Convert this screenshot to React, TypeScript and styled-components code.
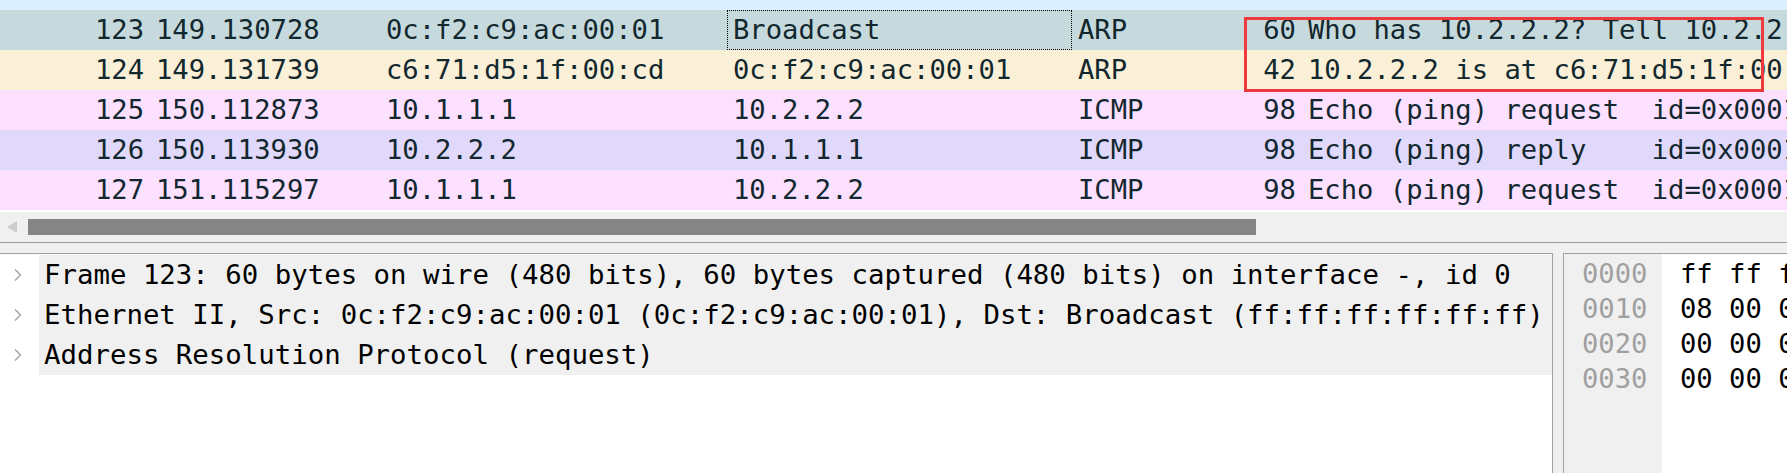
import React from "react";
import styled, { createGlobalStyle } from "styled-components";

const GlobalStyle = createGlobalStyle`
  html, body {
    margin: 0;
    padding: 0;
    background: #ffffff;
  }
  body {
    font-family: "DejaVu Sans Mono", "Liberation Mono", monospace;
  }
`;

const MONO = `"DejaVu Sans Mono", "Liberation Mono", monospace`;

const Window = styled.div`
  width: 1787px;
  height: 473px;
  display: flex;
  flex-direction: column;
  overflow: hidden;
  background: #f0f0f0;
  font-family: ${MONO};
  font-size: 27.2px;
`;

const PacketList = styled.div`
  position: relative;
  display: flex;
  flex-direction: column;
  background: #ffffff;
  padding-bottom: 2px;
  overflow: hidden;
`;

const PartialRow = styled.div`
  height: 10px;
  background: #daeeff;
`;

const Row = styled.div<{ $bg: string }>`
  display: grid;
  grid-template-columns: 150px 230px 347px 345px 118px 112px 1fr;
  height: 40px;
  line-height: 40px;
  background: ${(p) => p.$bg};
  color: #12272e;
`;

const Cell = styled.div<{ $right?: boolean; $focused?: boolean }>`
  padding: 0 6px;
  white-space: pre;
  overflow: hidden;
  text-align: ${(p) => (p.$right ? "right" : "left")};
  outline: ${(p) => (p.$focused ? "1px dotted #000000" : "none")};
  outline-offset: -1px;
`;

const Annotation = styled.div`
  position: absolute;
  left: 1244px;
  top: 17px;
  width: 520px;
  height: 75px;
  box-sizing: border-box;
  border: 3px solid #ec3a3f;
  pointer-events: none;
`;

const HScrollbar = styled.div`
  height: 31px;
  background: #f0f0f0;
  display: flex;
  align-items: flex-start;
  padding-top: 7px;
  box-sizing: border-box;
  border-bottom: 1px solid #9a9a9a;
`;

const ArrowLeft = styled.div`
  width: 28px;
  height: 16px;
  display: flex;
  align-items: center;
  justify-content: flex-start;
  padding-left: 7px;
  box-sizing: border-box;
`;

const Thumb = styled.div`
  width: 1228px;
  height: 16px;
  background: #858585;
`;

const Bottom = styled.div`
  flex: 1;
  display: flex;
  gap: 10px;
  margin-top: 10px;
  min-height: 0;
`;

const DetailPane = styled.div`
  width: 1554px;
  margin-left: -1px;
  flex-shrink: 0;
  border: 1px solid #a0a0a0;
  border-bottom: none;
  background: #ffffff;
  padding-top: 1px;
  box-sizing: border-box;
  display: flex;
  flex-direction: column;
`;

const TreeRow = styled.div`
  display: flex;
  height: 40px;
`;

const Expander = styled.div`
  width: 39px;
  flex-shrink: 0;
  display: flex;
  align-items: center;
  padding-left: 14px;
  box-sizing: border-box;
  background: #ffffff;
`;

const TreeLabel = styled.div`
  flex: 1;
  background: #f0f0f0;
  color: #000000;
  font-size: 27.38px;
  line-height: 40px;
  padding-left: 5px;
  white-space: pre;
  overflow: hidden;
`;

const HexPane = styled.div`
  flex: 1;
  display: flex;
  border: 1px solid #a0a0a0;
  border-right: none;
  border-bottom: none;
  background: #ffffff;
  overflow: hidden;
`;

const OffsetColumn = styled.div`
  width: 98px;
  flex-shrink: 0;
  background: #f0f0f0;
  padding: 2px 0 0 18px;
  box-sizing: border-box;
  color: #a0a0a0;
`;

const BytesColumn = styled.div`
  flex: 1;
  padding: 2px 0 0 18px;
  color: #000000;
  overflow: hidden;
`;

const HexLine = styled.div`
  height: 35px;
  line-height: 35px;
  white-space: pre;
`;

const Chevron = () => (
  <svg width="8" height="14" viewBox="0 0 8 14">
    <polyline
      points="1,1.5 6.5,7 1,12.5"
      fill="none"
      stroke="#a0a0a0"
      strokeWidth="1.3"
    />
  </svg>
);

const LeftTriangle = () => (
  <svg width="10" height="12" viewBox="0 0 10 12">
    <polygon points="0,6 10,0 10,12" fill="#cdcdcd" />
  </svg>
);

type Packet = {
  no: string;
  time: string;
  src: string;
  dst: string;
  proto: string;
  len: string;
  info: string;
  bg: string;
};

const packets: Packet[] = [
  {
    no: "123",
    time: "149.130728",
    src: "0c:f2:c9:ac:00:01",
    dst: "Broadcast",
    proto: "ARP",
    len: "60",
    info: "Who has 10.2.2.2? Tell 10.2.2.1",
    bg: "#c6dadd",
  },
  {
    no: "124",
    time: "149.131739",
    src: "c6:71:d5:1f:00:cd",
    dst: "0c:f2:c9:ac:00:01",
    proto: "ARP",
    len: "42",
    info: "10.2.2.2 is at c6:71:d5:1f:00:cd",
    bg: "#faf0d7",
  },
  {
    no: "125",
    time: "150.112873",
    src: "10.1.1.1",
    dst: "10.2.2.2",
    proto: "ICMP",
    len: "98",
    info: "Echo (ping) request  id=0x0001, seq=1/256, ttl=64 (reply in 126)",
    bg: "#fce0ff",
  },
  {
    no: "126",
    time: "150.113930",
    src: "10.2.2.2",
    dst: "10.1.1.1",
    proto: "ICMP",
    len: "98",
    info: "Echo (ping) reply    id=0x0001, seq=1/256, ttl=64 (request in 125)",
    bg: "#e0d9fc",
  },
  {
    no: "127",
    time: "151.115297",
    src: "10.1.1.1",
    dst: "10.2.2.2",
    proto: "ICMP",
    len: "98",
    info: "Echo (ping) request  id=0x0001, seq=2/512, ttl=64 (reply in 128)",
    bg: "#fce0ff",
  },
];

const treeItems = [
  "Frame 123: 60 bytes on wire (480 bits), 60 bytes captured (480 bits) on interface -, id 0",
  "Ethernet II, Src: 0c:f2:c9:ac:00:01 (0c:f2:c9:ac:00:01), Dst: Broadcast (ff:ff:ff:ff:ff:ff)",
  "Address Resolution Protocol (request)",
];

const hexRows = [
  ["0000", "ff ff ff ff ff ff 0c f2 c9 ac 00 01 08 06 00 01"],
  ["0010", "08 00 06 04 00 01 0c f2 c9 ac 00 01 0a 02 02 01"],
  ["0020", "00 00 00 00 00 00 0a 02 02 02 00 00 00 00 00 00"],
  ["0030", "00 00 00 00 00 00 00 00 00 00 00 00"],
];

export default function App() {
  return (
    <>
      <GlobalStyle />
      <Window>
        <PacketList>
          <PartialRow />
          {packets.map((p, i) => (
            <Row key={p.no} $bg={p.bg}>
              <Cell $right>{p.no}</Cell>
              <Cell>{p.time}</Cell>
              <Cell>{p.src}</Cell>
              <Cell $focused={i === 0}>{p.dst}</Cell>
              <Cell>{p.proto}</Cell>
              <Cell $right>{p.len}</Cell>
              <Cell>{p.info}</Cell>
            </Row>
          ))}
          <Annotation />
        </PacketList>
        <HScrollbar>
          <ArrowLeft>
            <LeftTriangle />
          </ArrowLeft>
          <Thumb />
        </HScrollbar>
        <Bottom>
          <DetailPane>
            {treeItems.map((t) => (
              <TreeRow key={t}>
                <Expander>
                  <Chevron />
                </Expander>
                <TreeLabel>{t}</TreeLabel>
              </TreeRow>
            ))}
          </DetailPane>
          <HexPane>
            <OffsetColumn>
              {hexRows.map(([o]) => (
                <HexLine key={o}>{o}</HexLine>
              ))}
            </OffsetColumn>
            <BytesColumn>
              {hexRows.map(([o, b]) => (
                <HexLine key={o}>{b}</HexLine>
              ))}
            </BytesColumn>
          </HexPane>
        </Bottom>
      </Window>
    </>
  );
}
